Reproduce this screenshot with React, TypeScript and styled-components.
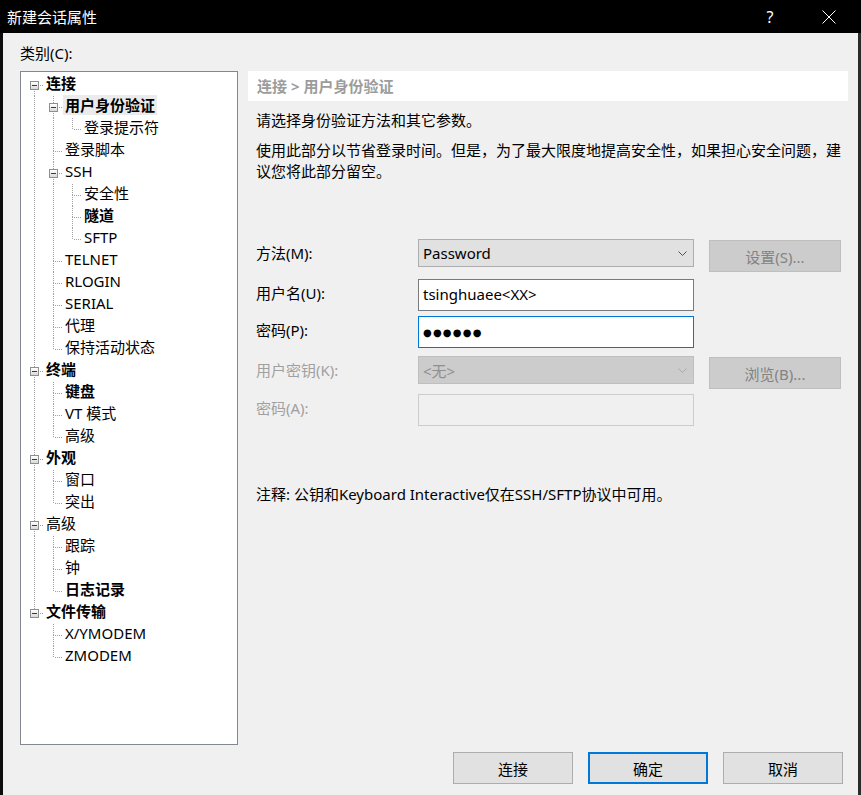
import styled, { createGlobalStyle } from "styled-components";

const GlobalStyle = createGlobalStyle`
  * { box-sizing: border-box; }
  html, body { margin: 0; padding: 0; background: #0c0c0c; }
  body {
    font-family: "Noto Sans", "Noto Sans CJK SC", sans-serif;
    font-size: 15px;
    color: #000;
  }
`;

type Node = { label: string; bold?: boolean; selected?: boolean; children?: Node[] };
type Row = { node: Node; level: number; guides: boolean[]; hasNext: boolean; first: boolean };

const TREE: Node[] = [
  {
    label: "连接",
    bold: true,
    children: [
      { label: "用户身份验证", bold: true, selected: true, children: [{ label: "登录提示符" }] },
      { label: "登录脚本" },
      { label: "SSH", children: [{ label: "安全性" }, { label: "隧道", bold: true }, { label: "SFTP" }] },
      { label: "TELNET" },
      { label: "RLOGIN" },
      { label: "SERIAL" },
      { label: "代理" },
      { label: "保持活动状态" },
    ],
  },
  { label: "终端", bold: true, children: [{ label: "键盘", bold: true }, { label: "VT 模式" }, { label: "高级" }] },
  { label: "外观", bold: true, children: [{ label: "窗口" }, { label: "突出" }] },
  { label: "高级", children: [{ label: "跟踪" }, { label: "钟" }, { label: "日志记录", bold: true }] },
  { label: "文件传输", bold: true, children: [{ label: "X/YMODEM" }, { label: "ZMODEM" }] },
];

function flatten(nodes: Node[], level: number, guides: boolean[], out: Row[]) {
  nodes.forEach((node, i) => {
    const hasNext = i < nodes.length - 1;
    out.push({ node, level, guides, hasNext, first: level === 0 && i === 0 });
    if (node.children) flatten(node.children, level + 1, [...guides, hasNext], out);
  });
  return out;
}

const Window = styled.div`
  width: 861px;
  height: 795px;
  display: flex;
  flex-direction: column;
`;

const TitleBar = styled.div`
  height: 33px;
  flex: none;
  display: flex;
  align-items: center;
  background: #000;
  color: #fff;
  padding-left: 7px;
  padding-right: 9px;
`;

const Title = styled.div`
  flex: 1;
  font-size: 15px;
  line-height: 20px;
`;

const CaptionButton = styled.div<{ $gap?: number }>`
  width: 46px;
  height: 33px;
  display: flex;
  align-items: center;
  justify-content: center;
  margin-left: ${(p) => p.$gap ?? 0}px;
  font-size: 16px;
  color: #fff;
`;

const Body = styled.div`
  flex: 1;
  background: #f0f0f0;
  border-left: 3px solid #0c0c0c;
  border-right: 3px solid #2b2b2b;
  padding: 11px 10px 11px 17px;
  display: grid;
  grid-template-columns: 218px 600px;
  grid-template-rows: 18px 1fr 32px;
  column-gap: 10px;
`;

const CategoryLabel = styled.div`
  grid-column: 1 / -1;
  line-height: 18px;
`;

const TreeBox = styled.div`
  grid-column: 1;
  grid-row: 2;
  margin: 9px 0 7px;
  border: 1px solid #828790;
  background: #fff;
  padding: 2px 0 0 4px;
`;

const TreeRow = styled.div`
  height: 22px;
  display: flex;
  align-items: flex-start;
`;

const Cell = styled.div<{ $line?: boolean }>`
  width: 19px;
  height: 22px;
  flex: none;
  position: relative;
  ${(p) =>
    p.$line &&
    `&::before {
      content: "";
      position: absolute;
      left: 9px;
      top: 0;
      width: 1px;
      height: 22px;
      background: linear-gradient(to bottom, #a0a0a0 50%, transparent 50%) 0 0 / 1px 2px;
    }`}
`;

const VLine = styled.div<{ $top: number }>`
  position: absolute;
  left: 9px;
  top: ${(p) => p.$top}px;
  width: 1px;
  height: 11px;
  background: linear-gradient(to bottom, #a0a0a0 50%, transparent 50%) 0 0 / 1px 2px;
`;

const HLine = styled.div`
  position: absolute;
  left: 10px;
  top: 11px;
  width: 9px;
  height: 1px;
  background: linear-gradient(to right, transparent 50%, #a0a0a0 50%) 0 0 / 2px 1px;
`;

const Expander = styled.div`
  position: absolute;
  left: 5px;
  top: 7px;
  width: 9px;
  height: 9px;
  border: 1px solid #8e8f8f;
  background: linear-gradient(to bottom, #ffffff, #d9d9d9);
  &::after {
    content: "";
    position: absolute;
    left: 1px;
    top: 3px;
    width: 5px;
    height: 1px;
    background: #1c3a78;
  }
`;

const NodeLabel = styled.div<{ $bold?: boolean; $selected?: boolean }>`
  height: 20px;
  margin-top: -1px;
  padding: 0 2px;
  line-height: 20px;
  white-space: nowrap;
  font-weight: ${(p) => (p.$bold ? 700 : 400)};
  background: ${(p) => (p.$selected ? "#ebebeb" : "transparent")};
`;

const Panel = styled.div`
  grid-column: 2;
  grid-row: 2;
  margin-top: 9px;
  display: flex;
  flex-direction: column;
`;

const Header = styled.div`
  height: 30px;
  background: #fff;
  padding-left: 9px;
  line-height: 30px;
  color: #9c9c9c;
  font-weight: 700;
`;

const Para = styled.div<{ $top: number; $lh: number }>`
  margin-top: ${(p) => p.$top}px;
  padding-left: 8px;
  line-height: ${(p) => p.$lh}px;
`;

const Form = styled.div`
  margin-top: 57px;
  padding-left: 8px;
  display: grid;
  grid-template-columns: 147px 276px 132px;
  grid-template-rows: 40px 37px 40px 38px 32px;
  column-gap: 15px;
  align-items: start;
`;

const FieldLabel = styled.div<{ $disabled?: boolean }>`
  line-height: 29px;
  color: ${(p) => (p.$disabled ? "#a0a0a0" : "#000")};
`;

const Select = styled.div<{ $disabled?: boolean }>`
  height: 28px;
  display: flex;
  align-items: center;
  justify-content: space-between;
  padding: 0 6px 0 4px;
  border: 1px solid ${(p) => (p.$disabled ? "#bfbfbf" : "#adadad")};
  background: ${(p) => (p.$disabled ? "#cccccc" : "#e1e1e1")};
  color: ${(p) => (p.$disabled ? "#8f8f8f" : "#000")};
`;

const Input = styled.div<{ $state?: "focus" | "disabled" }>`
  height: 32px;
  padding-left: 4px;
  line-height: 29px;
  border: 1px solid
    ${(p) => (p.$state === "focus" ? "#0078d7" : p.$state === "disabled" ? "#cccccc" : "#7a7a7a")};
  background: ${(p) => (p.$state === "disabled" ? "#f0f0f0" : "#fff")};
`;

const Mask = styled.span`
  font-family: "DejaVu Sans", sans-serif;
  font-size: 10px;
  letter-spacing: 1.2px;
  vertical-align: 1px;
`;

const SideButton = styled.div`
  height: 32px;
  margin-top: 1px;
  display: flex;
  align-items: center;
  justify-content: center;
  border: 1px solid #bfbfbf;
  background: #cccccc;
  color: #838383;
`;

const Note = styled.div`
  margin-top: 59px;
  padding-left: 8px;
  line-height: 18px;
`;

const ButtonBar = styled.div`
  grid-column: 1 / -1;
  grid-row: 3;
  display: flex;
  justify-content: flex-end;
  gap: 15px;
  padding-right: 5px;
`;

const Button = styled.div<{ $default?: boolean }>`
  width: 120px;
  height: 32px;
  display: flex;
  align-items: center;
  justify-content: center;
  background: #e1e1e1;
  border: ${(p) => (p.$default ? "2px solid #0078d7" : "1px solid #adadad")};
`;

function Chevron({ color }: { color: string }) {
  return (
    <svg width="9" height="5" viewBox="0 0 9 5">
      <polyline points="0.5,0.5 4.5,4.5 8.5,0.5" fill="none" stroke={color} strokeWidth="1" />
    </svg>
  );
}

function TreeView() {
  const rows = flatten(TREE, 0, [], []);
  return (
    <TreeBox>
      {rows.map((r, i) => (
        <TreeRow key={i}>
          {r.guides.map((g, j) => (
            <Cell key={j} $line={g} />
          ))}
          <Cell>
            {!r.first && <VLine $top={0} />}
            {r.hasNext && <VLine $top={11} />}
            <HLine />
            {r.node.children && <Expander />}
          </Cell>
          <NodeLabel $bold={r.node.bold} $selected={r.node.selected}>
            {r.node.label}
          </NodeLabel>
        </TreeRow>
      ))}
    </TreeBox>
  );
}

export default function App() {
  return (
    <Window>
      <GlobalStyle />
      <TitleBar>
        <Title>新建会话属性</Title>
        <CaptionButton>?</CaptionButton>
        <CaptionButton $gap={13}>
          <svg width="14" height="14" viewBox="0 0 14 14">
            <path d="M0.5 0.5 L13.5 13.5 M13.5 0.5 L0.5 13.5" stroke="#fff" strokeWidth="1" />
          </svg>
        </CaptionButton>
      </TitleBar>
      <Body>
        <CategoryLabel>类别(C):</CategoryLabel>
        <TreeView />
        <Panel>
          <Header>连接 &gt; 用户身份验证</Header>
          <Para $top={10} $lh={18}>请选择身份验证方法和其它参数。</Para>
          <Para $top={11} $lh={21}>
            使用此部分以节省登录时间。但是，为了最大限度地提高安全性，如果担心安全问题，建议您将此部分留空。
          </Para>
          <Form>
            <FieldLabel>方法(M):</FieldLabel>
            <Select>
              <span>Password</span>
              <Chevron color="#505050" />
            </Select>
            <SideButton>设置(S)...</SideButton>

            <FieldLabel>用户名(U):</FieldLabel>
            <Input>tsinghuaee&lt;XX&gt;</Input>
            <div />

            <FieldLabel>密码(P):</FieldLabel>
            <Input $state="focus">
              <Mask>●●●●●●</Mask>
            </Input>
            <div />

            <FieldLabel $disabled>用户密钥(K):</FieldLabel>
            <Select $disabled>
              <span>&lt;无&gt;</span>
              <Chevron color="#a8a8a8" />
            </Select>
            <SideButton>浏览(B)...</SideButton>

            <FieldLabel $disabled>密码(A):</FieldLabel>
            <Input $state="disabled" />
            <div />
          </Form>
          <Note>注释: 公钥和Keyboard Interactive仅在SSH/SFTP协议中可用。</Note>
        </Panel>
        <ButtonBar>
          <Button>连接</Button>
          <Button $default>确定</Button>
          <Button>取消</Button>
        </ButtonBar>
      </Body>
    </Window>
  );
}
